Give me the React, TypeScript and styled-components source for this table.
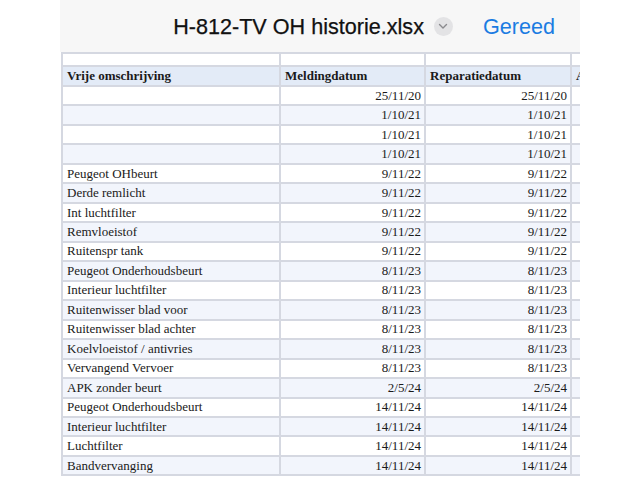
import styled, { createGlobalStyle } from 'styled-components';

const GlobalStyle = createGlobalStyle`
	html, body {
		margin: 0;
		padding: 0;
		background: #ffffff;
	}
`;

const rows: [string, string, string][] = [
	['', '25/11/20', '25/11/20'],
	['', '1/10/21', '1/10/21'],
	['', '1/10/21', '1/10/21'],
	['', '1/10/21', '1/10/21'],
	['Peugeot OHbeurt', '9/11/22', '9/11/22'],
	['Derde remlicht', '9/11/22', '9/11/22'],
	['Int luchtfilter', '9/11/22', '9/11/22'],
	['Remvloeistof', '9/11/22', '9/11/22'],
	['Ruitenspr tank', '9/11/22', '9/11/22'],
	['Peugeot Onderhoudsbeurt', '8/11/23', '8/11/23'],
	['Interieur luchtfilter', '8/11/23', '8/11/23'],
	['Ruitenwisser blad voor', '8/11/23', '8/11/23'],
	['Ruitenwisser blad achter', '8/11/23', '8/11/23'],
	['Koelvloeistof / antivries', '8/11/23', '8/11/23'],
	['Vervangend Vervoer', '8/11/23', '8/11/23'],
	['APK zonder beurt', '2/5/24', '2/5/24'],
	['Peugeot Onderhoudsbeurt', '14/11/24', '14/11/24'],
	['Interieur luchtfilter', '14/11/24', '14/11/24'],
	['Luchtfilter', '14/11/24', '14/11/24'],
	['Bandvervanging', '14/11/24', '14/11/24'],
];

export default function App() {
	return (
		<>
			<GlobalStyle />
			<Frame>
				<Header>
					<Title>H-812-TV OH historie.xlsx</Title>
					<MenuButton>
						<svg width='10' height='7' viewBox='0 0 10 7'>
							<path d='M1.5 1.5 L5 5 L8.5 1.5' fill='none' stroke='#8a8a8e' strokeWidth='1.4' strokeLinecap='round' strokeLinejoin='round' />
						</svg>
					</MenuButton>
					<Done>Gereed</Done>
				</Header>
				<Sheet>
					<colgroup>
						<col style={{ width: 218 }} />
						<col style={{ width: 145 }} />
						<col style={{ width: 146 }} />
						<col style={{ width: 60 }} />
					</colgroup>
					<tbody>
						<SpacerRow>
							<td />
							<td />
							<td />
							<td />
						</SpacerRow>
						<HeadRow>
							<HeadCell>Vrije omschrijving</HeadCell>
							<HeadCell>Meldingdatum</HeadCell>
							<HeadCell>Reparatiedatum</HeadCell>
							<HeadCell>Afgerond</HeadCell>
						</HeadRow>
						{rows.map(([label, melding, reparatie], i) => (
							<DataRow key={i} $shaded={i % 2 === 1}>
								<Cell>{label}</Cell>
								<Cell $right>{melding}</Cell>
								<Cell $right>{reparatie}</Cell>
								<Cell />
							</DataRow>
						))}
					</tbody>
				</Sheet>
			</Frame>
		</>
	);
}

const Frame = styled.div`
	margin-left: 60px;
	width: 520px;
	height: 480px;
	overflow: hidden;
	background: #ffffff;
`;

const Header = styled.div`
	height: 52px;
	background: #f7f7f7;
	display: flex;
	align-items: center;
	justify-content: flex-end;
	padding-right: 25px;
	font-family: 'Liberation Sans', Arial, sans-serif;
`;

const Title = styled.div`
	font-size: 21.6px;
	color: #111111;
	-webkit-text-stroke: 0.25px #111111;
	margin-top: 1px;
`;

const MenuButton = styled.div`
	width: 19px;
	height: 19px;
	border-radius: 50%;
	background: #e3e3e5;
	margin-left: 10px;
	display: flex;
	align-items: center;
	justify-content: center;
`;

const Done = styled.div`
	margin-left: 30px;
	font-size: 21.6px;
	color: #1b7ce2;
	margin-top: 1px;
`;

const Sheet = styled.table`
	table-layout: fixed;
	border-collapse: collapse;
	width: 569px;
	margin-left: 1px;
	font-family: 'Liberation Serif', 'Times New Roman', serif;
	font-size: 13px;
	color: #1a1a1a;

	td {
		border: 2px solid #d5d8e1;
		padding: 0 3px 0 4px;
		white-space: nowrap;
		overflow: hidden;
	}
`;

const SpacerRow = styled.tr`
	height: 13px;
	background: #ffffff;
`;

const HeadRow = styled.tr`
	height: 20px;
	background: #e3ebf7;
`;

const HeadCell = styled.td`
	font-weight: bold;
`;

const DataRow = styled.tr<{ $shaded: boolean }>`
	height: 19.47px;
	background: ${p => (p.$shaded ? '#f2f5fc' : '#ffffff')};
`;

const Cell = styled.td<{ $right?: boolean }>`
	text-align: ${p => (p.$right ? 'right' : 'left')};
`;
